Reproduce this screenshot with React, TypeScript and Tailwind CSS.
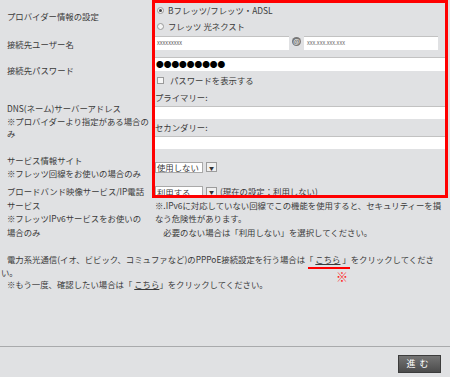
import React from "react";

const Radio = ({ checked }: { checked?: boolean }) => (
  <span className="ml-[2px] mr-[4px] inline-flex h-[7px] w-[7px] shrink-0 items-center justify-center rounded-full border border-[#9a9a9a] bg-[#f4f4f4]">
    {checked && <span className="h-[3px] w-[3px] rounded-full bg-[#444]" />}
  </span>
);

const Field = ({ className, children }: { className?: string; children?: React.ReactNode }) => (
  <div className={`flex h-[13px] items-center border-t border-t-[#c2c2c2] bg-white ${className ?? ""}`}>{children}</div>
);

const Select = ({ value }: { value: string }) => (
  <span className="inline-flex h-[11px] items-center">
    <span className="flex h-[11px] w-[48px] items-center border border-[#a9a9a9] bg-white pl-[1px] leading-none">{value}</span>
    <span className="ml-[3px] flex h-[10px] w-[11px] items-center justify-center border border-[#9c9c9c] bg-[#f0f0f0] text-[5px] leading-none text-[#333]">▼</span>
  </span>
);

export default function App() {
  return (
    <div className="relative h-[377px] w-[450px] overflow-hidden bg-[#e0e1e3] font-['Noto_Sans_CJK_JP',sans-serif] text-[8.4px] text-[#3a3a3a]">
      {/* provider */}
      <div className="flex h-[34px]">
        <div className="w-[155px] shrink-0 pl-[7px] pt-[11px] leading-[10px]">プロバイダー情報の設定</div>
        <div className="flex-1 pr-[5px] pt-[2px] leading-[16px]">
          <div className="flex items-center"><Radio checked />Bフレッツ/フレッツ・ADSL</div>
          <div className="flex items-center"><Radio />フレッツ 光ネクスト</div>
        </div>
      </div>

      {/* user */}
      <div className="flex h-[21px]">
        <div className="w-[155px] shrink-0 pl-[7px] pt-[3px] leading-[14px]">接続先ユーザー名</div>
        <div className="flex flex-1 items-start pr-[5px] pt-[2px]">
          <Field className="h-[14px] w-[134px] pl-[2px] text-[5.6px] text-[#555]">xxxxxxxxx</Field>
          <span className="mx-[3px] mt-[1px] flex h-[9px] w-[9px] items-center justify-center rounded-full bg-[#777] text-[7px] leading-none text-white">@</span>
          <Field className="h-[14px] w-[134px] pl-[3px] text-[5.6px] text-[#666]">xxx.xxx.xxx.xxx</Field>
        </div>
      </div>

      {/* password */}
      <div className="flex h-[34px]">
        <div className="w-[155px] shrink-0 pl-[7px] pt-[8px] leading-[14px]">接続先パスワード</div>
        <div className="flex-1 pr-[3px] pt-[2px]">
          <Field className="h-[14px] pl-[1px] text-[7.7px] text-black">●●●●●●●●●</Field>
          <div className="flex items-center leading-[18px]">
            <span className="ml-[2px] mr-[6px] inline-block h-[7px] w-[7px] border border-[#9a9a9a] bg-[#f6f6f6]" />
            パスワードを表示する
          </div>
        </div>
      </div>

      {/* dns */}
      <div className="flex h-[64px]">
        <div className="w-[155px] shrink-0 pl-[7px] pt-[13px] leading-[12.5px]">
          DNS(ネーム)サーバーアドレス<br />
          ※プロバイダーより指定がある場合の<br />み
        </div>
        <div className="flex-1 pr-[3px]">
          <div className="leading-[16px]">プライマリー:</div>
          <Field className="mt-[1px]" />
          <div className="leading-[16px]">セカンダリー:</div>
          <Field className="mt-[1px]" />
        </div>
      </div>

      {/* service site */}
      <div className="flex h-[32px]">
        <div className="w-[155px] shrink-0 pl-[7px] pt-[1px] leading-[13px]">
          サービス情報サイト<br />※フレッツ回線をお使いの場合のみ
        </div>
        <div className="flex-1 pt-[8px]">
          <Select value="使用しない" />
        </div>
      </div>

      {/* broadband */}
      <div className="flex h-[64px]">
        <div className="w-[155px] shrink-0 pl-[7px] leading-[13.5px]">
          ブロードバンド映像サービス/IP電話<br />サービス<br />
          ※フレッツIPv6サービスをお使いの<br />場合のみ
        </div>
        <div className="flex-1 whitespace-nowrap leading-[13.5px]">
          <div className="flex items-center">
            <Select value="利用する" />
            <span className="ml-[3px]">(現在の設定：利用しない)</span>
          </div>
          <div>※.IPv6に対応していない回線でこの機能を使用すると、セキュリティーを損</div>
          <div>なう危険性があります。</div>
          <div>　必要のない場合は「利用しない」を選択してください。</div>
        </div>
      </div>

      {/* pppoe notes */}
      <div className="mt-[4px] whitespace-nowrap leading-[12.5px]">
        <div className="pl-[7px]">
          電力系光通信(イオ、ビビック、コミュファなど)のPPPoE接続設定を行う場合は「 <span className="underline">こちら</span> 」をクリックしてくださ
        </div>
        <div className="pl-[1px]">い。</div>
        <div className="pl-[7px]">
          ※もう一度、確認したい場合は「 <span className="underline">こちら</span>」をクリックしてください。
        </div>
      </div>

      <div className="mt-[55px] border-t border-t-[#a9aaac]" />
      <div className="flex justify-end pr-[9px] pt-[8px]">
        <button className="h-[18px] w-[43px] border border-[#3c3c3c] bg-gradient-to-b from-[#747474] to-[#4c4c4c] text-[9px] leading-none tracking-[4px] text-white">
          進む
        </button>
      </div>

      {/* annotations */}
      <div className="pointer-events-none absolute left-[152px] top-0 h-[198px] w-[296px] border-[3px] border-[#ff0000]" />
      <div className="pointer-events-none absolute left-[308px] top-[267px] h-[2px] w-[42px] bg-[#ff0000]" />
      <div className="pointer-events-none absolute left-[336px] top-[270px] text-[12px] leading-[14px] text-[#ff2020]">※</div>
    </div>
  );
}
